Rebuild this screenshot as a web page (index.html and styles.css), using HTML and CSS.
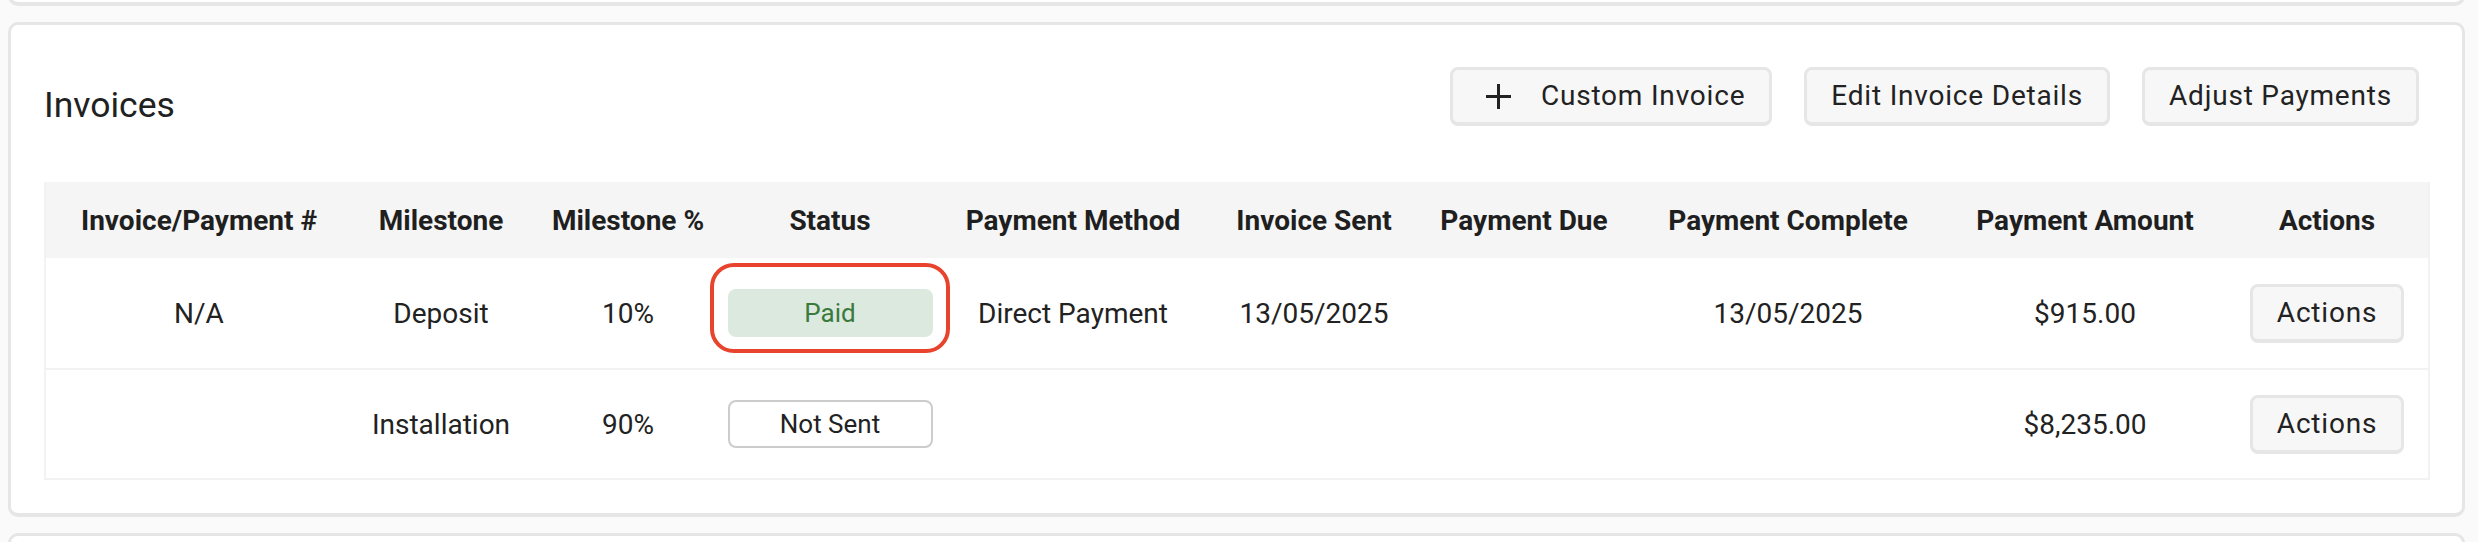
FILE: index.html
```html
<!DOCTYPE html>
<html lang="en">

<head>
    <meta charset="UTF-8">
    <meta name="viewport" content="width=device-width, initial-scale=1.0">
    <title>Invoices</title>
    <link rel="stylesheet" href="styles.css">
</head>

<body>
    <div class="page">
        <div class="card card-prev"></div>

        <div class="card invoices">
            <div class="invoices-head">
                <h2 class="title">Invoices</h2>
                <div class="head-actions">
                    <button class="btn">
                        <svg class="btn-icon" viewBox="0 0 25 25"><path d="M12.5 0v25M0 12.5h25" /></svg>
                        Custom Invoice
                    </button>
                    <button class="btn">Edit Invoice Details</button>
                    <button class="btn">Adjust Payments</button>
                </div>
            </div>

            <table class="invoice-table">
                <colgroup>
                    <col style="width: 306px">
                    <col style="width: 178px">
                    <col style="width: 196px">
                    <col style="width: 208px">
                    <col style="width: 278px">
                    <col style="width: 204px">
                    <col style="width: 216px">
                    <col style="width: 312px">
                    <col style="width: 282px">
                    <col style="width: 202px">
                </colgroup>
                <thead>
                    <tr>
                        <th>Invoice/Payment #</th>
                        <th>Milestone</th>
                        <th>Milestone %</th>
                        <th>Status</th>
                        <th>Payment Method</th>
                        <th>Invoice Sent</th>
                        <th>Payment Due</th>
                        <th>Payment Complete</th>
                        <th>Payment Amount</th>
                        <th>Actions</th>
                    </tr>
                </thead>
                <tbody>
                    <tr>
                        <td>N/A</td>
                        <td>Deposit</td>
                        <td>10%</td>
                        <td><span class="status status-paid">Paid</span></td>
                        <td>Direct Payment</td>
                        <td>13/05/2025</td>
                        <td></td>
                        <td>13/05/2025</td>
                        <td>$915.00</td>
                        <td><button class="btn">Actions</button></td>
                    </tr>
                    <tr>
                        <td></td>
                        <td>Installation</td>
                        <td>90%</td>
                        <td><span class="status status-not-sent">Not Sent</span></td>
                        <td></td>
                        <td></td>
                        <td></td>
                        <td></td>
                        <td>$8,235.00</td>
                        <td><button class="btn">Actions</button></td>
                    </tr>
                </tbody>
            </table>
        </div>

        <div class="card card-next"></div>
    </div>
</body>

</html>
```

FILE: styles.css
```css
* {
    box-sizing: border-box;
}

body {
    margin: 0;
    background: #fafafa;
    font-family: Roboto, "Liberation Sans", sans-serif;
    color: #222;
}

.page {
    height: 542px;
    padding: 0 13px 0 8px;
    overflow: hidden;
}

.card {
    background: #fff;
    border: 3px solid #e6e6e6;
    border-bottom-width: 4px;
    border-radius: 10px;
}

.card-prev {
    height: 44px;
    margin-top: -38px;
}

.card-next {
    height: 60px;
    margin-top: 16px;
}

.invoices {
    margin-top: 16px;
    padding: 42px 32px 33px 33px;
}

/* title + buttons */
.invoices-head {
    display: flex;
    align-items: center;
    justify-content: space-between;
}

.title {
    margin: 0;
    padding-top: 16px;
    font-size: 35.5px;
    font-weight: 400;
    line-height: 42px;
    color: #212121;
}

.head-actions {
    display: flex;
    gap: 32px;
    margin-right: 11px;
}

.btn {
    display: inline-flex;
    align-items: center;
    padding: 5px 24px;
    font-family: inherit;
    font-size: 28px;
    line-height: 42px;
    letter-spacing: 0.8px;
    color: #222;
    background: #f7f7f7;
    border: 3px solid #e6e6e6;
    border-bottom-width: 4px;
    border-radius: 8px;
    cursor: pointer;
}

.btn-icon {
    width: 25px;
    height: 25px;
    margin: 0 30px 0 9px;
    fill: none;
    stroke: #222;
    stroke-width: 3;
}

/* table */
.invoice-table {
    width: 100%;
    margin-top: 56px;
    table-layout: fixed;
    border-collapse: separate;
    border-spacing: 0;
    border: 2px solid #f2f2f2;
    border-top: 0;
    font-size: 28px;
}

.invoice-table th {
    height: 76px;
    padding: 0;
    background: #f5f5f5;
    font-weight: 700;
    color: #1f1f1f;
    text-align: center;
}

.invoice-table td {
    height: 110px;
    padding: 0;
    text-align: center;
    vertical-align: middle;
}

.invoice-table tbody tr + tr td {
    border-top: 2px solid #f2f2f2;
}

.status {
    display: inline-block;
    width: 205px;
    height: 48px;
    font-size: 26px;
    border-radius: 8px;
    vertical-align: middle;
}

.status-paid {
    position: relative;
    line-height: 48px;
    background: #dce9df;
    color: #3a7a3c;
}

/* red highlight round the paid badge */
.status-paid::after {
    content: "";
    position: absolute;
    top: -26px;
    bottom: -16px;
    left: -18px;
    right: -17px;
    border: 4px solid #e8432d;
    border-radius: 24px;
}

.status-not-sent {
    line-height: 44px;
    background: #fff;
    border: 2px solid #cccccc;
    color: #222;
}
```
